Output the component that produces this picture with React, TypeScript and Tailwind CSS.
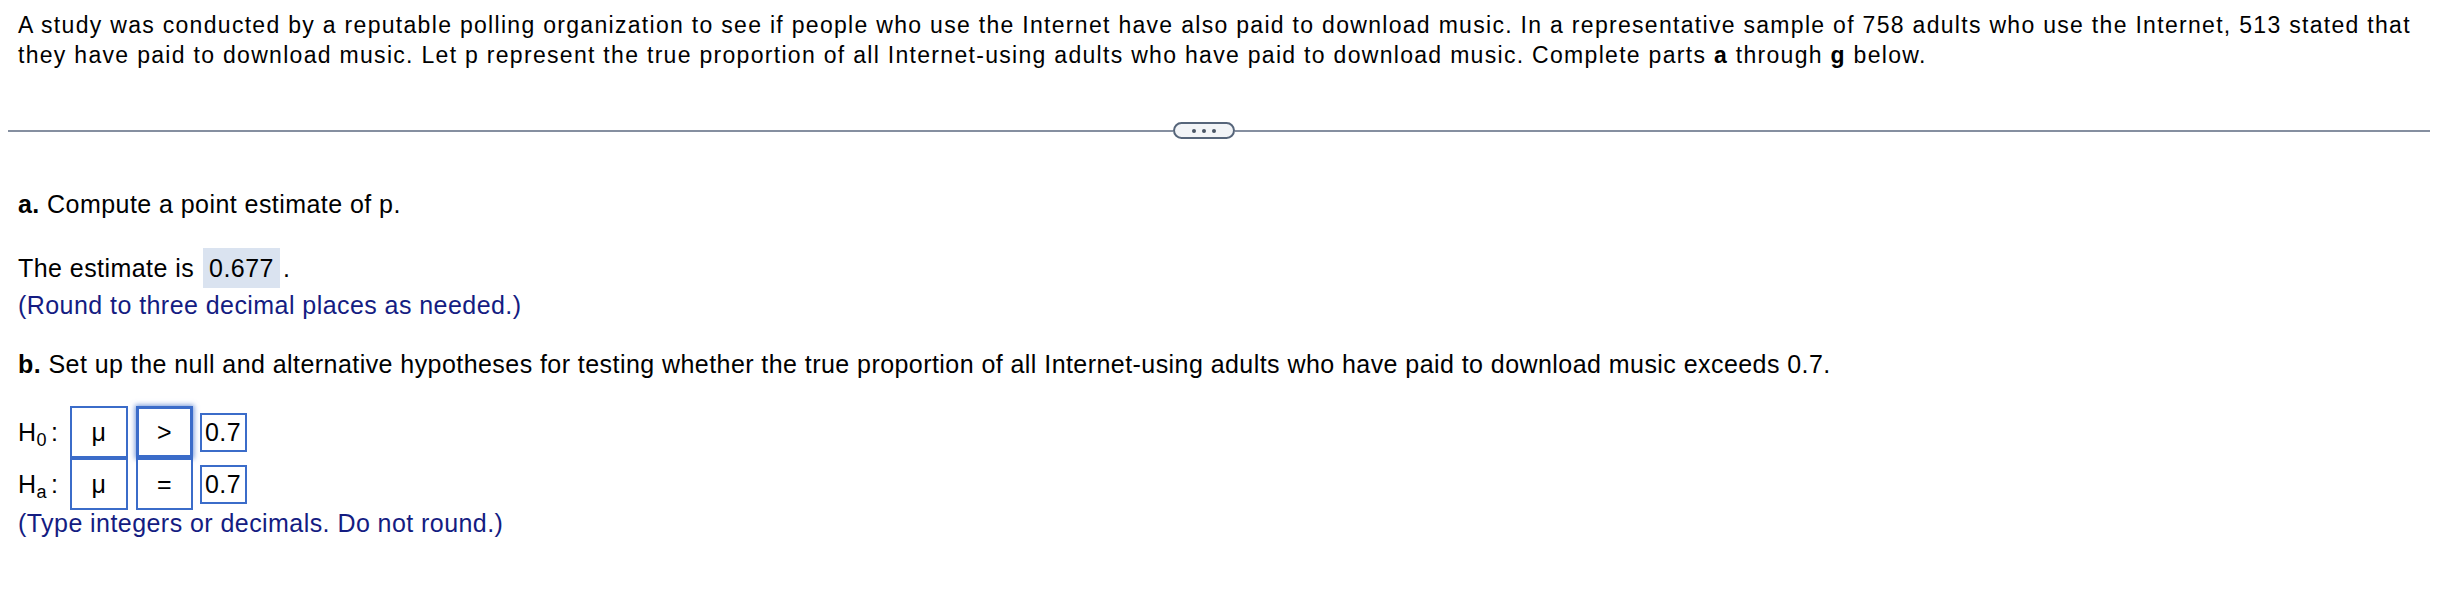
const box = "flex items-center justify-center border-2 border-[#3b6cc9] bg-white";

function Hyp({ sub, op, focus }: { sub: string; op: string; focus?: boolean }) {
  return (
    <div className="flex h-[52px] items-center">
      <div className="flex w-[52px] items-center">
        <span>H</span>
        <span className="relative top-[8px] text-[18px] leading-[18px]">{sub}</span>
        <span className="ml-[4px]">:</span>
      </div>
      <div className={`${box} h-[52px] w-[58px]`}>μ</div>
      <div
        className={`${box} ml-[8px] h-[52px] w-[57px] ${
          focus ? "border-[3px] shadow-[0_0_5px_1px_rgba(59,108,201,0.7)]" : ""
        }`}
      >
        {op}
      </div>
      <div className={`${box} ml-[7px] h-[39px] w-[47px] justify-start pl-[3px]`}>0.7</div>
    </div>
  );
}

export default function App() {
  return (
    <div className="h-[612px] w-[2438px] bg-white font-['Liberation_Sans',Arial,sans-serif] text-black">
      {/* question stem */}
      <p className="whitespace-nowrap pl-[18px] pt-[10px] text-[23px] leading-[30px] tracking-[1.3px]">
        A study was conducted by a reputable polling organization to see if people who use the
        Internet have also paid to download music. In a representative sample of 758 adults who use
        the Internet, 513 stated that
        <br />
        they have paid to download music. Let p represent the true proportion of all Internet-using
        adults who have paid to download music. Complete parts <b>a</b> through <b>g</b> below.
      </p>

      {/* divider */}
      <div className="mt-[52px] flex items-center px-[8px]">
        <div className="h-[2px] w-[1165px] bg-[#858fa0]" />
        <div className="flex h-[17px] w-[62px] items-center justify-center gap-[6px] rounded-full border-2 border-[#56657a] bg-[#f2f4f7]">
          <span className="h-[4px] w-[4px] rounded-full bg-[#4a5565]" />
          <span className="h-[4px] w-[4px] rounded-full bg-[#4a5565]" />
          <span className="h-[4px] w-[4px] rounded-full bg-[#4a5565]" />
        </div>
        <div className="h-[2px] flex-1 bg-[#858fa0]" />
      </div>

      <div className="pl-[18px] text-[25px] leading-[28px] tracking-[0.44px]">
        {/* part a */}
        <p className="mt-[51px]">
          <b>a.</b> Compute a point estimate of p.
        </p>
        <div className="mt-[30px] flex h-[40px] items-center">
          <span>The estimate is</span>
          <span className="ml-[9px] flex h-[40px] items-center bg-[#dae3f0] px-[6px]">0.677</span>
          <span className="ml-[3px]">.</span>
        </div>
        <p className="mt-[3px] text-[#141c82]">(Round to three decimal places as needed.)</p>

        {/* part b */}
        <p className="mt-[31px]">
          <b>b.</b> Set up the null and alternative hypotheses for testing whether the true
          proportion of all Internet-using adults who have paid to download music exceeds 0.7.
        </p>
        <div className="mt-[28px]">
          <Hyp sub="0" op=">" focus />
          <Hyp sub="a" op="=" />
        </div>
        <p className="-mt-[1px] text-[#141c82]">(Type integers or decimals. Do not round.)</p>
      </div>
    </div>
  );
}
